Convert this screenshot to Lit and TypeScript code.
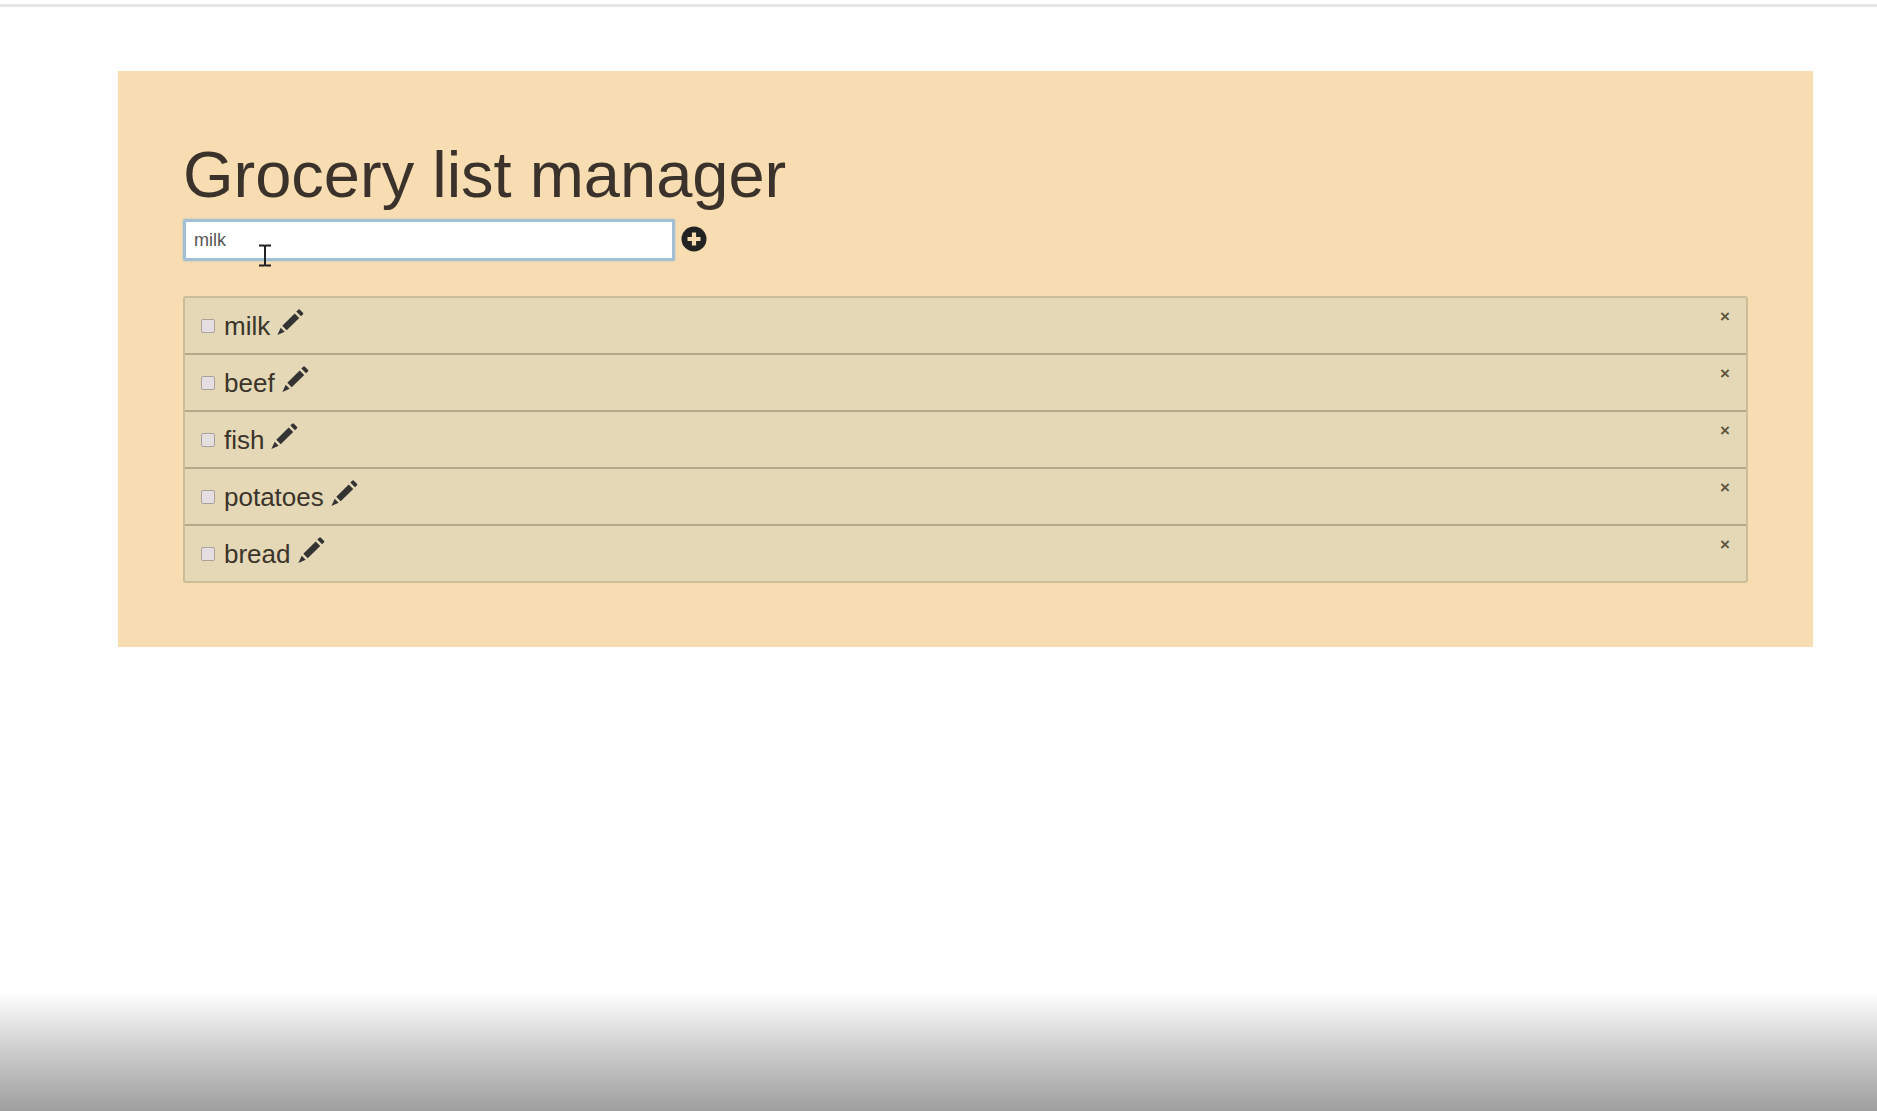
import { LitElement, html, css, svg } from "lit";
import { customElement, state } from "lit/decorators.js";

interface Item {
  id: number;
  name: string;
  done: boolean;
}

const plusIcon = svg`<circle cx="13" cy="13" r="12.5" fill="#222"></circle>
  <path d="M10.9 6.5h4.2v4.4h4.4v4.2h-4.4v4.4h-4.2v-4.4H6.500v-4.200h4.400z" fill="#f7ddb1"></path>`;

const pencilIcon = svg`<path d="M21.200.7a1.200 1.200 0 0 1 1.700 0l3 3a1.200 1.200 0 0 1 0 1.700l-1.900 1.900-4.700-4.700z"></path>
  <path d="M17.700 4.500l4.500 4.500L9.700 21.300 5.300 16.800z"></path>
  <path d="M3.700 18.700l4 4.100L.4 26z"></path>`;

@customElement("app-root")
export class AppRoot extends LitElement {
  static styles = css`
    :host {
      display: block;
      min-height: 100vh;
      box-sizing: border-box;
      position: relative;
      background: #fefefe;
      color: #3a342b;
      font-family: "Liberation Sans", Arial, sans-serif;
      font-size: 26px;
      line-height: 36px;
    }
    .bar {
      height: 3px;
      margin: 0;
      border: 0;
      background: #e6e6e6;
    }
    .top {
      padding-top: 4px;
    }
    .panel {
      margin: 64px 64px 0 118px;
      padding: 64px 65px;
      background: #f7ddb1;
    }
    h1 {
      margin: 4px 0 8px;
      font-size: 65px;
      line-height: 72px;
      font-weight: 400;
      color: #3a322b;
    }
    form {
      display: flex;
      align-items: center;
      gap: 6px;
      margin: 0 0 35px;
    }
    .entry {
      box-sizing: border-box;
      flex: 0 1 492px;
      min-width: 0;
      height: 42px;
      padding: 0 8px;
      border: 3px solid #a3bfd4;
      border-radius: 2px;
      background: #fff;
      box-shadow: 0 0 2px #a3bfd4;
      outline: none;
      font: 18px "Liberation Sans", Arial, sans-serif;
      color: #555;
    }
    button {
      padding: 0;
      border: 0;
      background: none;
      color: inherit;
      font: inherit;
      cursor: pointer;
    }
    svg {
      display: block;
      fill: #333;
    }
    .add {
      margin-bottom: 2px;
    }
    ul {
      list-style: none;
      margin: 0;
      padding: 0;
      border: 2px solid #ccbd98;
      border-radius: 3px;
      background: #e4d8b6;
    }
    li {
      display: flex;
      align-items: center;
      gap: 7px;
      height: 55px;
      padding: 0 16px;
    }
    li + li {
      border-top: 2px solid #b6a888;
    }
    .tick {
      appearance: none;
      box-sizing: border-box;
      width: 14px;
      height: 14px;
      margin: 0 2px 0 0;
      border: 1px solid #aaa09c;
      border-radius: 2px;
      background: #e5dfe2;
    }
    .tick:checked {
      background: #777;
    }
    .remove {
      align-self: flex-start;
      margin: 9px 0 0 auto;
      font-size: 17px;
      line-height: 20px;
      font-weight: 700;
      color: #5f553f;
    }
    .edit {
      margin-bottom: 6px;
    }
    .pointer {
      position: absolute;
      left: 258px;
      top: 244px;
      pointer-events: none;
    }
    .shade {
      position: absolute;
      left: 0;
      right: 0;
      bottom: 0;
      height: 117px;
      background: linear-gradient(#fefefe, #e2e2e2 27%, #c8c8c8 54%, #9e9e9e);
      pointer-events: none;
    }
  `;

  @state() private draft = "milk";
  @state() private items: Item[] = ["milk", "beef", "fish", "potatoes", "bread"].map(
    (name, id) => ({ id, name, done: false })
  );

  private add(e: Event) {
    e.preventDefault();
    const name = this.draft.trim();
    if (name) this.items = [...this.items, { id: Date.now(), name, done: false }];
  }

  private remove(id: number) {
    this.items = this.items.filter((i) => i.id !== id);
  }

  private edit(item: Item) {
    this.draft = item.name;
  }

  private toggle(id: number) {
    this.items = this.items.map((i) => (i.id === id ? { ...i, done: !i.done } : i));
  }

  render() {
    return html`
      <div class="top"><hr class="bar" /></div>
      <main class="panel">
        <h1>Grocery list manager</h1>
        <form @submit=${this.add}>
          <input
            class="entry"
            type="text"
            aria-label="Item"
            .value=${this.draft}
            @input=${(e: Event) => (this.draft = (e.target as HTMLInputElement).value)}
          />
          <button class="add" type="submit" aria-label="Add">
            <svg width="26" height="26" viewBox="0 0 26 26">${plusIcon}</svg>
          </button>
        </form>
        <ul>
          ${this.items.map(
            (item) => html`<li>
              <input
                class="tick"
                type="checkbox"
                id="item-${item.id}"
                .checked=${item.done}
                @change=${() => this.toggle(item.id)}
              />
              <label for="item-${item.id}">${item.name}</label>
              <button class="edit" type="button" aria-label="Edit" @click=${() => this.edit(item)}>
                <svg width="27" height="27" viewBox="0 0 27 27">${pencilIcon}</svg>
              </button>
              <button class="remove" type="button" aria-label="Remove" @click=${() => this.remove(item.id)}>×</button>
            </li>`
          )}
        </ul>
      </main>
      <svg class="pointer" width="14" height="23" viewBox="0 0 14 23" aria-hidden="true">
        <path d="M1 1.500h5l1 1 1-1h5M1 21.500h5l1-1 1 1h5M7 2v19" fill="none" stroke="#222" stroke-width="2"></path>
      </svg>
      <div class="shade"></div>
    `;
  }
}
